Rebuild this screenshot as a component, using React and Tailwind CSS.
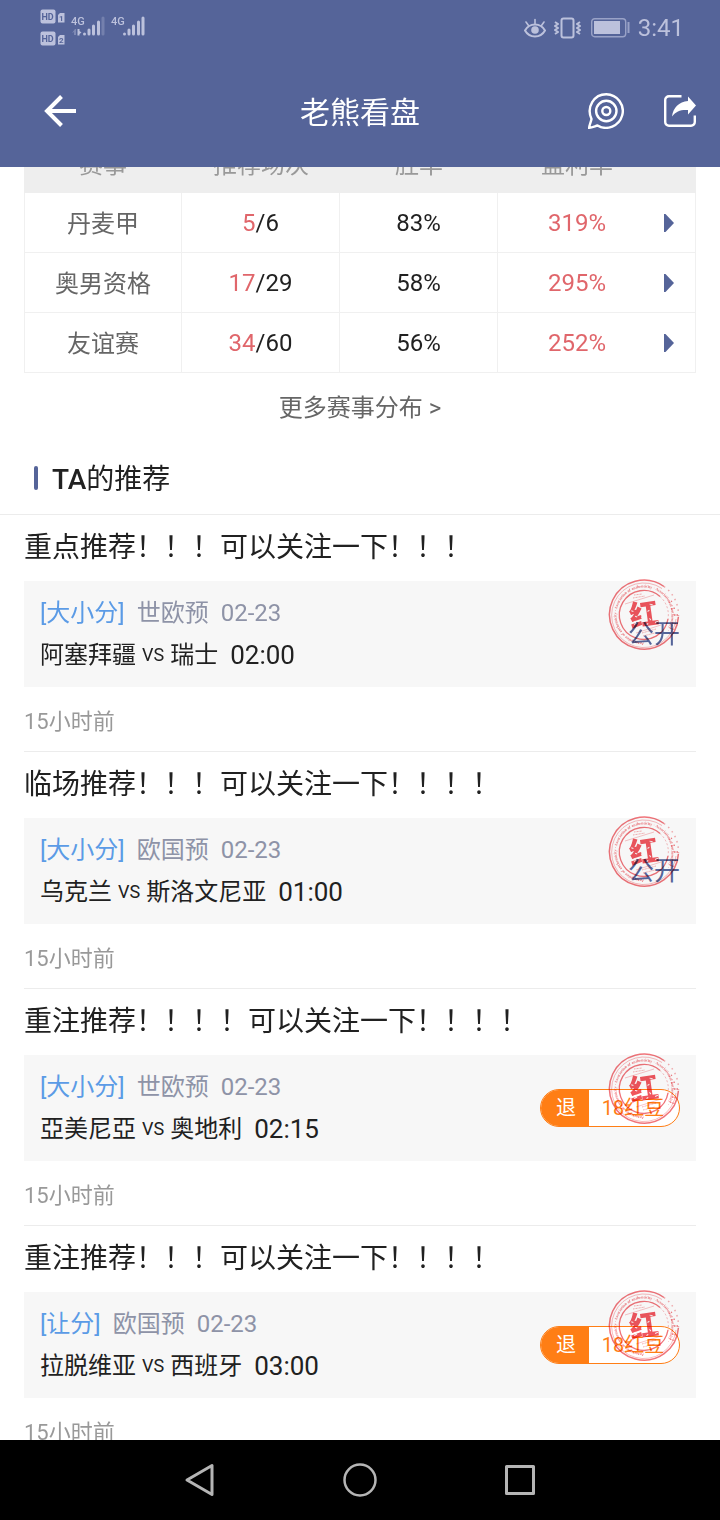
import React from "react";

const leagues = [
  { name: "丹麦甲", win: 5, total: 6, rate: "83%", profit: "319%" },
  { name: "奥男资格", win: 17, total: 29, rate: "58%", profit: "295%" },
  { name: "友谊赛", win: 34, total: 60, rate: "56%", profit: "252%" },
];

const posts = [
  {
    title: "重点推荐！！！可以关注一下！！！",
    type: "[大小分]",
    league: "世欧预",
    date: "02-23",
    home: "阿塞拜疆",
    away: "瑞士",
    time: "02:00",
    ago: "15小时前",
  },
  {
    title: "临场推荐！！！可以关注一下！！！！",
    type: "[大小分]",
    league: "欧国预",
    date: "02-23",
    home: "乌克兰",
    away: "斯洛文尼亚",
    time: "01:00",
    ago: "15小时前",
  },
  {
    title: "重注推荐！！！！可以关注一下！！！！",
    type: "[大小分]",
    league: "世欧预",
    date: "02-23",
    home: "亞美尼亞",
    away: "奥地利",
    time: "02:15",
    ago: "15小时前",
    price: "18红豆",
  },
  {
    title: "重注推荐！！！可以关注一下！！！！",
    type: "[让分]",
    league: "欧国预",
    date: "02-23",
    home: "拉脱维亚",
    away: "西班牙",
    time: "03:00",
    ago: "15小时前",
    price: "18红豆",
  },
];

const SignalIcons = () => (
  <svg width="108" height="40" viewBox="0 0 108 40" fill="#bcc1dc" fontFamily="Roboto, sans-serif" fontWeight="700">
    <rect x="0.5" y="1.5" width="15" height="14" rx="2" />
    <rect x="0.5" y="23.5" width="15" height="14" rx="2" />
    <path d="M18 7l2-2h4.500v9.500H18z" />
    <path d="M18 29l2-2h4.500v9.500H18z" />
    <g fill="#556499">
      <text x="1.500" y="12" fontSize="9">HD</text>
      <text x="1.500" y="34" fontSize="9">HD</text>
      <text x="19" y="13" fontSize="8">1</text>
      <text x="19" y="35" fontSize="8">2</text>
    </g>
    <text x="31" y="17" fontSize="11" fontWeight="500">4G</text>
    <text x="71" y="17" fontSize="11" fontWeight="500">4G</text>
    <g strokeWidth="3" strokeLinecap="round" stroke="#bcc1dc">
      <path d="M44.500 26v0M49 22v4M53.500 18v8M58.500 14v12" />
      <path d="M84.500 26v0M89 22v4M93.500 18v8M98.500 14v12M103 10v16" />
      <path d="M63 10v16" opacity="0.300" />
    </g>
    <path d="M37.500 21v6.500h2V26l2-1.500-2-1.500v-2z" />
    <path d="M36 21v6h-2v-3l-2 1 3-4z" opacity="0.400" />
  </svg>
);

const EyeIcon = () => (
  <svg width="22" height="20" viewBox="0 0 22 20" fill="none" stroke="#bcc1dc" strokeWidth="2" strokeLinecap="round">
    <path d="M1 12.500C5.500 4.500 16.500 4.500 21 12.500C16.500 20.500 5.500 20.500 1 12.500Z" />
    <circle cx="11" cy="12" r="3.800" fill="#bcc1dc" stroke="none" />
    <path d="M11 1.500v4M2 4l2.500 3.500M20 4l-2.500 3.500" strokeWidth="1.600" />
  </svg>
);

const VibrateIcon = () => (
  <svg width="27" height="22" viewBox="0 0 27 22" fill="none" stroke="#bcc1dc" strokeWidth="2">
    <rect x="7.500" y="1.500" width="12" height="19" rx="2" />
    <path
      d="M1 5l3 2-3 2 3 2-3 2 3 2-3 2M26 5l-3 2 3 2-3 2 3 2-3 2 3 2"
      strokeWidth="2"
      strokeLinejoin="round"
    />
  </svg>
);

const BatteryIcon = () => (
  <svg width="39" height="20" viewBox="0 0 39 20" fill="none">
    <rect x="0.700" y="0.700" width="34" height="18" rx="3" stroke="#99a2c7" strokeWidth="1.400" />
    <rect x="3" y="3" width="26" height="13" fill="#bcc1dc" />
    <rect x="36.500" y="4" width="2" height="11" fill="#99a2c7" />
  </svg>
);

const BackIcon = () => (
  <svg width="32" height="32" viewBox="0 0 32 32" fill="none" stroke="#fff" strokeWidth="4">
    <path d="M17.500 1.500L3 16l14.500 14.500M3 16h29" />
  </svg>
);

const ChatIcon = () => (
  <svg width="36" height="36" viewBox="0 0 36 36" fill="none" stroke="#fff" strokeWidth="2.400">
    <path d="M3.500 26C-2 14 6 1.200 18.300 1.200A16.800 16.800 0 1 1 9.500 32.500C7 33.200 4 34.500 1.200 34.800C1.200 32 3 29 3.500 26Z" />
    <circle cx="18.300" cy="18" r="10.200" />
    <circle cx="18.300" cy="18" r="4" />
  </svg>
);

const ShareIcon = () => (
  <svg width="32" height="32" viewBox="0 0 32 32" fill="none">
    <path
      d="M17.500 1.200H5A3.800 3.800 0 0 0 1.200 5V27A3.800 3.800 0 0 0 5 30.800H27A3.800 3.800 0 0 0 30.800 27V20.500"
      stroke="#fff"
      strokeWidth="2.400"
    />
    <path d="M24 1.500L32 10.500L24 19.500V15C17 14.500 12 16 8 21.500C9 13 15 6.500 24 6Z" fill="#fff" />
  </svg>
);

const Stamp = ({ id }) => (
  <svg
    className="absolute -top-0.5 right-4 mix-blend-multiply"
    width="72"
    height="72"
    viewBox="0 0 72 72"
    fill="none"
    stroke="#f0747a"
  >
    <defs>
      <path id={id} d="M36 63.500A27.500 27.500 0 1 1 36.100 63.500" />
    </defs>
    <path d="M56 7.500A34.500 34.500 0 1 0 70.400 38" strokeWidth="1.500" />
    <path d="M56 7.500A34.500 34.500 0 0 1 70.400 38" strokeWidth="1.500" strokeDasharray="1.500 4" opacity="0.600" />
    <path d="M54 9.500A32.300 32.300 0 1 0 68 40" strokeWidth="0.700" opacity="0.700" />
    <path d="M52 17.500A24.500 24.500 0 1 0 60 40" strokeWidth="1.400" />
    <path d="M52 17.500A24.500 24.500 0 0 1 60 40" strokeWidth="1" strokeDasharray="2 2" opacity="0.500" />
    <path d="M61 24l3-2M63 30l4-1M64 44l5 1M62 49l5 2M66 36h4" strokeWidth="1.300" strokeDasharray="1.500 1" />
    <text fill="#f0747a" stroke="none" fontSize="4" fontFamily="Liberation Serif, serif" fontWeight="700">
      <textPath href={`#${id}`}>
        Association of authenticity · Association of authenticity · Association of authenticity ·
      </textPath>
    </text>
    <path d="M17 25L46 16M28 54L53 46" strokeWidth="0.600" opacity="0.700" />
    <path d="M26 16l8-1M25 19l12-2M34 54l14-4M35 57l12-3" strokeWidth="1" strokeDasharray="1 0.500" opacity="0.600" />
    <g transform="rotate(-8 36 36)">
      <text
        x="36"
        y="46"
        textAnchor="middle"
        fill="#f0565e"
        stroke="none"
        fontSize="29"
        fontFamily="Noto Sans CJK SC, sans-serif"
        fontWeight="900"
      >
        红
      </text>
      {/* worn spots in the ink */}
      <path
        d="M24 30l2 1M27 36l2 1M25 44l3-1M43 26l3 1M40 33l2-1M41 40l1 2M46 45l3-1M32 25l1 2M33 38l1 1M37 46l2-1"
        stroke="#f8f8f8"
        strokeWidth="1"
      />
    </g>
  </svg>
);

const PostItem = ({ post, index }) => (
  <li className="border-b border-[#ececec]">
    <h3 className="py-3 text-[28px] leading-[42px] whitespace-nowrap text-[#212121]">{post.title}</h3>
    <div className="relative flex items-center justify-between bg-[#f7f7f7] px-4 py-[11px]">
      <div className="whitespace-nowrap">
        <div className="flex gap-3 text-2xl leading-[42px] text-[#8e93a7]">
          <span className="text-[#5b9be6]">{post.type}</span>
          <span>{post.league}</span>
          <span>{post.date}</span>
        </div>
        <div className="flex h-[42px] items-center text-2xl leading-[42px] text-[#212121]">
          <span>{post.home}</span>
          <span className="px-1.5 text-lg leading-[42px]">VS</span>
          <span>{post.away}</span>
          <span className="pl-3 text-[26px] leading-[42px]">{post.time}</span>
        </div>
      </div>
      {post.price ? (
        <button className="flex h-[38px] overflow-hidden rounded-full border border-[#ff7e15] bg-white text-xl leading-9 text-[#ff7e15]">
          <span className="w-12 pl-0.5 text-center bg-[#ff7e15] text-white">退</span>
          <span className="w-[90px] pr-0.5 text-center">{post.price}</span>
        </button>
      ) : (
        <span className="text-[26px] leading-[42px] text-[#556499]">公开</span>
      )}
      <Stamp id={`stamp-ring-${index}`} />
    </div>
    <p className="pt-1.5 text-[22px] leading-[58px] text-[#999]">{post.ago}</p>
  </li>
);

const App = () => {
  return (
    <div
      lang="zh-CN"
      className="flex h-screen flex-col overflow-hidden bg-white font-['Roboto','Noto_Sans_CJK_SC',sans-serif] text-[#212121]"
    >
      <header className="shrink-0 bg-[#556499] text-white">
        <div className="flex h-14 items-center justify-between pr-9 pl-10">
          <SignalIcons />
          <div className="flex items-center">
            <EyeIcon />
            <span className="pl-2">
              <VibrateIcon />
            </span>
            <span className="pl-2.5">
              <BatteryIcon />
            </span>
            <span className="pl-2 text-2xl text-[#bcc1dc]">3:41</span>
          </div>
        </div>
        <div className="grid h-[111px] grid-cols-[1fr_auto_1fr] items-center px-6 pb-0.5">
          <button aria-label="返回" className="justify-self-start pl-5">
            <BackIcon />
          </button>
          <h1 className="pt-1 text-3xl">老熊看盘</h1>
          <div className="flex items-center justify-end gap-10">
            <button aria-label="消息">
              <ChatIcon />
            </button>
            <button aria-label="分享">
              <ShareIcon />
            </button>
          </div>
        </div>
      </header>

      <main className="min-h-0 flex-1 overflow-hidden">
        {/* list is scrolled a little, the table head slides under the title bar */}
        <div className="-mt-[34px]">
          <section className="px-6">
            <table className="w-full table-fixed border-separate border-spacing-0 text-center text-2xl">
              <colgroup>
                <col />
                <col />
                <col />
                <col />
                <col className="w-10" />
              </colgroup>
              <thead>
                <tr className="h-[60px] bg-[#eee] text-[#999]">
                  <th className="pt-[3px] font-normal">赛事</th>
                  <th className="pt-[3px] font-normal">推荐场次</th>
                  <th className="pt-[3px] font-normal">胜率</th>
                  <th className="pt-[3px] font-normal">盈利率</th>
                  <th></th>
                </tr>
              </thead>
              <tbody>
                {leagues.map((item) => (
                  <tr key={item.name} className="h-[60px]">
                    <td className="border-x border-b border-[#f0f0f0] pt-[3px] text-[#666]">{item.name}</td>
                    <td className="border-r border-b border-[#f0f0f0]">
                      <span className="text-[#e0666b]">{item.win}</span>/{item.total}
                    </td>
                    <td className="border-r border-b border-[#f0f0f0]">{item.rate}</td>
                    <td className="border-b border-[#f0f0f0] text-[#e0666b]">{item.profit}</td>
                    <td className="border-r border-b border-[#f0f0f0] pl-2">
                      <button aria-label="详情" className="block">
                        <svg width="10" height="18" viewBox="0 0 10 18" fill="#556499">
                          <path d="M0 0h1.500L10 9 1.500 18H0z" />
                        </svg>
                      </button>
                    </td>
                  </tr>
                ))}
              </tbody>
            </table>
            <a href="#more" className="block pt-1 pb-1 text-center text-2xl leading-[62px] text-[#666]">
              更多赛事分布 &gt;
            </a>
          </section>

          <h2 className="flex items-center border-b border-[#ececec] pt-[3px] pl-[34px] text-[28px] leading-[68px] font-normal">
            <i className="mr-3.5 mb-1 h-6 w-1 rounded-sm bg-[#556499]"></i>
            <span className="font-medium">TA</span>的推荐
          </h2>

          <ul className="px-6">
            {posts.map((post, index) => (
              <PostItem key={index} post={post} index={index} />
            ))}
          </ul>
        </div>
      </main>

      <nav className="flex h-20 shrink-0 items-center justify-center bg-black">
        <button aria-label="后退" className="flex w-40 justify-center">
          <svg width="34" height="36" viewBox="0 0 34 36" fill="none" stroke="#b5b5b5" strokeWidth="3" strokeLinejoin="round">
            <path d="M4 18L29 3.500v29z" />
          </svg>
        </button>
        <button aria-label="主页" className="flex w-40 justify-center">
          <svg width="36" height="36" viewBox="0 0 36 36" fill="none" stroke="#b5b5b5" strokeWidth="2.500">
            <circle cx="18" cy="18" r="15.500" />
          </svg>
        </button>
        <button aria-label="任务" className="flex w-40 justify-center">
          <svg width="36" height="36" viewBox="0 0 36 36" fill="none" stroke="#b5b5b5" strokeWidth="3" strokeLinejoin="round">
            <rect x="4.500" y="4.500" width="27" height="27" />
          </svg>
        </button>
      </nav>
    </div>
  );
};

export default App;
